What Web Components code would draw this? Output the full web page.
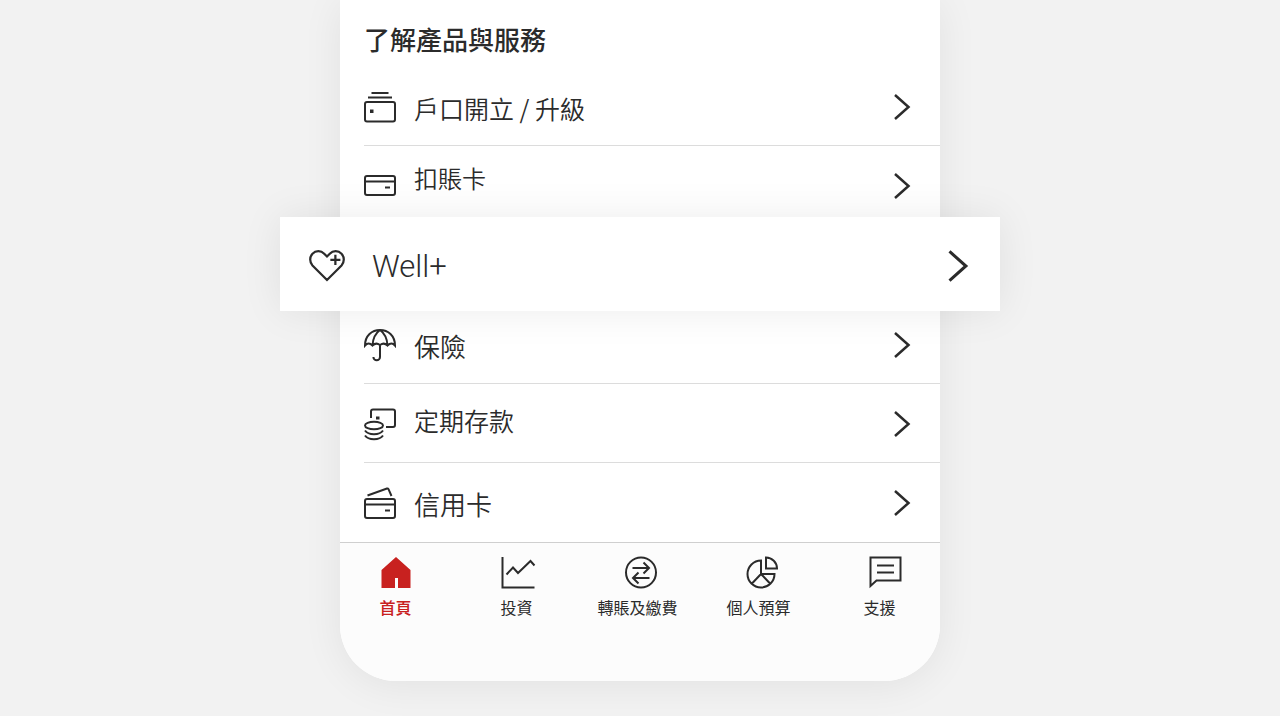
<!DOCTYPE html>
<html lang="zh-Hant-HK">
<head>
<meta charset="utf-8">
<meta name="viewport" content="width=device-width, initial-scale=1">
<title>了解產品與服務</title>
<style>
  html {
    background: #fff;
  }
  body {
    margin: 0;
    color: #2b2b2b;
    font-family: "Noto Sans CJK TC", "Noto Sans", sans-serif;
  }
</style>
</head>
<body>
<app-screen>
  <product-list heading="了解產品與服務">
    <product-row icon="wallet" style="--row-size: 25px">戶口開立 / 升級</product-row>
    <product-row icon="debit" style="--row-size: 24px; --row-lift: 18px">扣賬卡</product-row>
    <product-row icon="heart" featured>Well+</product-row>
    <product-row icon="umbrella" style="--row-size: 26px">保險</product-row>
    <product-row icon="deposit" style="--row-size: 25px; --row-lift: 10px">定期存款</product-row>
    <product-row icon="credit" style="--row-size: 26px">信用卡</product-row>
  </product-list>
  <tab-bar slot="footer">
    <tab-item icon="home" active>首頁</tab-item>
    <tab-item icon="chart">投資</tab-item>
    <tab-item icon="transfer">轉賬及繳費</tab-item>
    <tab-item icon="budget">個人預算</tab-item>
    <tab-item icon="support">支援</tab-item>
  </tab-bar>
</app-screen>

<script>
const ROW_ICONS = {
  wallet: `<rect x="1" y="12" width="30" height="19.500" rx="2"/><path d="M4 7.500h24M7.500 3h17"/><path d="M6 19.500h3.500V23H6z" fill="currentColor" stroke="none"/>`,
  debit: `<rect x="1" y="7" width="30" height="19" rx="2"/><path d="M1 12.500h30M21 18.500h5"/>`,
  heart: `<path d="M16 29.500L3 16.500a7.800 7.800 0 0 1 0-10.500a7.300 7.300 0 0 1 10.500 0L16 8.500l2.500-2.500a7.300 7.300 0 0 1 10.500 0a7.800 7.800 0 0 1 0 10.500z"/><path d="M23.500 7v9M19 11.500h9"/>`,
  umbrella: `<path d="M1 17.500C1 7.500 8 2 16 2S31 7.500 31 17.500q-3.500-4-7.500 0q-3.500-3.500-7.500-.5q-4-3-7.500.5q-4-4-7.500 0zM16 2q-7 5-7.500 15.500M16 2q7 5 7.500 15.500M16 17v12a3.300 3.300 0 0 1-6.600 0"/>`,
  deposit: `<path d="M7 11V4.500a2 2 0 0 1 2-2h20a2 2 0 0 1 2 2V18a2 2 0 0 1-2 2h-7"/><ellipse cx="10" cy="18.500" rx="9" ry="3.800"/><path d="M1 23.500q2.500 3.700 9 3.700t9-3.700M1 28.500q2.500 3.700 9 3.700t9-3.700"/><path d="M12 9.500h3.500v3H12z" fill="currentColor" stroke="none"/>`,
  credit: `<rect x="1" y="13" width="30" height="19" rx="2"/><path d="M1 18.500h30M21 24.500h5M3.500 9.500L23 2.500q1-.3 1.500.7L27.500 10"/>`
};

const TAB_ICONS = {
  home: `<path d="M24 1L38.500 14v18H26V22h-3v10H9.500V14z" fill="currentColor" stroke="none"/>`,
  chart: `<path d="M9.500 1v30.500h32M13.500 18.500l6.500-7 5 5.500L37.500 5l4 4.500"/>`,
  transfer: `<circle cx="27" cy="16.500" r="15"/><path d="M18.500 12H35M29.500 6.500L35 12l-5.500 5.500M35.500 22H19M24.500 16.500L19 22l5.500 5.500"/>`,
  budget: `<path d="M26 4.500a13.500 13.500 0 1 0 13.500 13.500H26zM26 18l-9.500 10M26 18l9.500 10M31 1.500v11H42a11 11 0 0 0-11-11z"/>`,
  support: `<path d="M14.500 1.500h30v23H20.500l-6 5.500zM21 9.500h17M21 16.500h17"/>`
};

class AppScreen extends HTMLElement {
  constructor() {
    super();
    this.attachShadow({ mode: "open" }).innerHTML = `
<style>
  :host {
    display: block;
    overflow: hidden;
    padding-bottom: 35px;
    background: #f2f2f2;
  }
  .panel {
    width: 100%;
    max-width: 600px;
    margin: 0 auto;
    background: #fff;
    border-radius: 0 0 56px 56px;
    box-shadow: 0 4px 40px rgba(0, 0, 0, 0.07);
  }
</style>
<div class="panel">
  <main><slot></slot></main>
  <slot name="footer"></slot>
</div>
`;
  }
}
customElements.define("app-screen", AppScreen);

class ProductList extends HTMLElement {
  constructor() {
    super();
    this.attachShadow({ mode: "open" }).innerHTML = `
<style>
  :host {
    display: block;
  }
  h1 {
    box-sizing: border-box;
    height: 67px;
    margin: 0;
    padding: 19px 24px 0;
    font-size: 26px;
    font-weight: 500;
    line-height: 40px;
  }
</style>
<h1></h1>
<div role="list"><slot></slot></div>
`;
  }

  connectedCallback() {
    this.shadowRoot.querySelector("h1").textContent = this.getAttribute("heading");
  }
}
customElements.define("product-list", ProductList);

class ProductRow extends HTMLElement {
  connectedCallback() {
    if (this.shadowRoot) return;
    this.setAttribute("role", "listitem");
    this.attachShadow({ mode: "open" }).innerHTML = `
<style>
  :host {
    display: block;
    padding-left: 24px;
  }
  a {
    display: flex;
    align-items: center;
    box-sizing: border-box;
    height: 79px;
    padding: 2px 29px 0 0;
    border-bottom: 1px solid #dcdcdc;
    color: inherit;
    text-decoration: none;
  }
  svg {
    flex: none;
    fill: none;
    stroke: currentColor;
    stroke-width: 2;
  }
  .icon {
    width: 32px;
    height: 34px;
    margin-right: 18px;
  }
  .label {
    flex: 1;
    padding: 2px 0 var(--row-lift, 0);
    font-size: var(--row-size);
    font-weight: 350;
    line-height: 36px;
  }
  .arrow {
    width: 18px;
    height: 28px;
    stroke-width: 2.5;
  }
  :host(:last-of-type) a {
    border-bottom-color: transparent;
  }
  /* raised card that is wider than the list */
  :host([featured]) {
    position: relative;
    z-index: 1;
    margin: -8px -60px -6px;
    padding: 0;
    background: #fff;
    box-shadow: 0 0 40px rgba(0, 0, 0, 0.08);
  }
  :host([featured]) a {
    height: 94px;
    padding: 4px 31px 0 29px;
    border: 0;
  }
  :host([featured]) .icon {
    width: 36px;
    height: 38px;
    margin-right: 27px;
  }
  :host([featured]) .label {
    font-family: Roboto, "Noto Sans", sans-serif;
    font-size: 31px;
    font-weight: 300;
  }
  :host([featured]) .arrow {
    width: 22px;
    height: 34px;
  }
</style>
<a href="#">
  <svg class="icon" viewBox="0 0 32 34" aria-hidden="true">${ROW_ICONS[this.getAttribute("icon")]}</svg>
  <span class="label"><slot></slot></span>
  <svg class="arrow" viewBox="0 0 18 28" aria-hidden="true"><path d="M2 2l13.500 12L2 26"/></svg>
</a>
`;
  }
}
customElements.define("product-row", ProductRow);

class TabBar extends HTMLElement {
  constructor() {
    super();
    this.attachShadow({ mode: "open" }).innerHTML = `
<style>
  :host {
    display: block;
    overflow: hidden;
    border-top: 1px solid #cfcfcf;
    border-radius: 0 0 56px 56px;
    background: #fcfcfc;
  }
  nav {
    display: grid;
    grid-template-columns: repeat(5, 1fr);
    margin-left: -5px;
    padding: 13px 0 62px;
  }
</style>
<nav><slot></slot></nav>
`;
  }
}
customElements.define("tab-bar", TabBar);

class TabItem extends HTMLElement {
  connectedCallback() {
    if (this.shadowRoot) return;
    this.attachShadow({ mode: "open" }).innerHTML = `
<style>
  :host {
    display: block;
  }
  :host([active]) {
    color: #c8211f;
  }
  a {
    display: flex;
    flex-direction: column;
    align-items: center;
    gap: 6px;
    color: inherit;
    font-size: 16px;
    font-weight: 400;
    line-height: 24px;
    text-decoration: none;
    white-space: nowrap;
  }
  :host([active]) a {
    font-weight: 500;
  }
  svg {
    width: 48px;
    height: 33px;
    fill: none;
    stroke: currentColor;
    stroke-width: 2;
  }
</style>
<a href="#">
  <svg viewBox="0 0 48 33" aria-hidden="true">${TAB_ICONS[this.getAttribute("icon")]}</svg>
  <span><slot></slot></span>
</a>
`;
    if (this.hasAttribute("active")) {
      this.shadowRoot.querySelector("a").setAttribute("aria-current", "page");
    }
  }
}
customElements.define("tab-item", TabItem);
</script>
</body>
</html>
